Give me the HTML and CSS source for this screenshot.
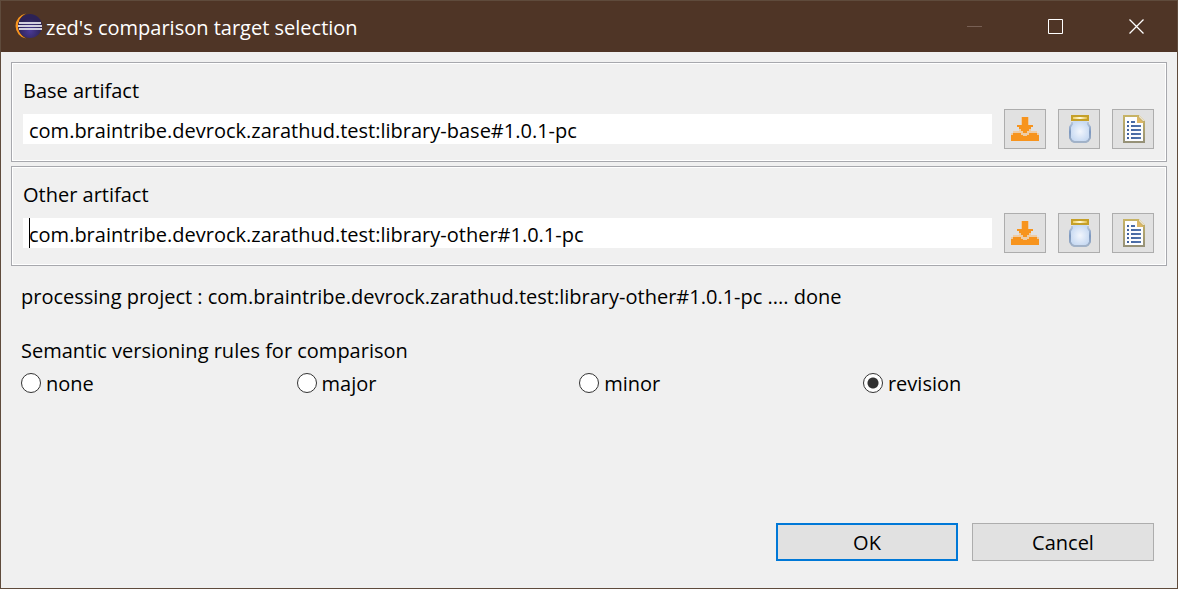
FILE: index.html
```html
<!DOCTYPE html>
<html lang="en">
<head>
<meta charset="utf-8">
<title>zed's comparison target selection</title>
<link rel="stylesheet" href="styles.css">
</head>
<body>
<svg class="defs" aria-hidden="true">
  <defs>
    <linearGradient id="gold" x1="0" y1="0" x2="0" y2="1"><stop offset="0" stop-color="#c8b464"/><stop offset="1" stop-color="#949078"/></linearGradient>
    <radialGradient id="glass"><stop offset="0" stop-color="#f2f6fd"/><stop offset="1" stop-color="#c8daf2"/></radialGradient>
    <linearGradient id="lid"><stop offset="0" stop-color="#f0cf60"/><stop offset=".5" stop-color="#fffbe0"/><stop offset="1" stop-color="#e5bd45"/></linearGradient>
    <linearGradient id="rim" x1="0" y1="0" x2="0" y2="1"><stop offset="0" stop-color="#b9c8dc"/><stop offset=".5" stop-color="#7d98bf"/><stop offset="1" stop-color="#a3b3c8"/></linearGradient>
    <linearGradient id="line"><stop offset="0" stop-color="#3d5f9c"/><stop offset="1" stop-color="#5577ae"/></linearGradient>
    <radialGradient id="orb" cx=".5" cy=".7"><stop offset="0" stop-color="#4a3a96"/><stop offset="1" stop-color="#2c2255"/></radialGradient>
    <symbol id="download" viewBox="0 0 32 32">
      <path fill="#fbb869" d="M12 4h8v8h4v2h-2v4h6v2h2v8H2v-8h2v-2h6v-4H8v-2h4z" opacity=".5"/>
      <path fill="#f7941e" d="M13 4h6v8h5v2h-2v2h-2v2h-2v2h-4v-2h-2v-2h-2v-2H8v-2h5z"/>
      <path fill="#f7941e" d="M4 20h8v2h2v1h4v-1h2v-2h8v2h2v6H2v-6h2z"/>
    </symbol>
    <symbol id="jar" viewBox="0 0 32 32">
      <path fill="url(#glass)" d="M10 8h14v2h2v3h1v14h-2v2H9v-2H7V13h1v-3h2z"/>
      <path fill="none" stroke="url(#rim)" stroke-width="2" d="M9 9v2l-2 3v11l2 3 2 1h12l2-1 2-3V14l-2-3V9"/>
      <path fill="#c5a029" d="M8 2h18v6H8z"/>
      <path fill="url(#lid)" d="M10 4h14v2H10z"/>
    </symbol>
    <symbol id="report" viewBox="0 0 32 32">
      <path fill="url(#gold)" d="M6 2h16l6 6v22H6z"/>
      <path fill="#fcfdff" d="M8 4h12v6h6v18H8z"/>
      <path fill="#dcb766" d="M20 3l7 7h-7z"/>
      <path fill="#ede4cf" d="M22 2l6 6h-2l-4-4z"/>
      <path fill="url(#line)" d="M10 8h2v2h-2zM14 8h4v2h-4zM10 12h2v2h-2zM14 12h10v2H14zM10 16h2v2h-2zM14 16h10v2H14zM10 20h2v2h-2zM14 20h10v2H14zM10 24h2v2h-2zM14 24h10v2H14z"/>
    </symbol>
  </defs>
</svg>
<main class="window">
  <header class="titlebar">
    <svg class="logo" viewBox="0 0 28 28" aria-hidden="true">
      <path fill="#f7941e" d="M12 .5A12.700 12.700 0 0 0 12 25.500A14 14 0 0 1 12 .5z"/>
      <circle cx="16" cy="13" r="12" fill="url(#orb)"/>
      <path fill="#d3d0df" d="M5 9h22v2H5zM4 12h24v2H4zM5 15h23v2H5z"/>
    </svg>
    <h1 class="title">zed's comparison target selection</h1>
    <div class="controls">
      <button class="control control-off" type="button" aria-label="Minimize" disabled><svg viewBox="0 0 15 15"><path d="M0 7.500h15"/></svg></button>
      <button class="control" type="button" aria-label="Maximize"><svg viewBox="0 0 15 15"><path d="M.5.5h14v14H.5z"/></svg></button>
      <button class="control" type="button" aria-label="Close"><svg viewBox="0 0 15 15"><path stroke-width="1.300" d="M.5.5l14 14M14.500.5l-14 14"/></svg></button>
    </div>
  </header>
  <form class="content">
    <section class="group">
      <label class="label" for="base">Base artifact</label>
      <div class="row">
        <div class="field"><input class="text" id="base" type="text" value="com.braintribe.devrock.zarathud.test:library-base#1.0.1-pc"></div>
        <button class="tool" type="button" aria-label="Download"><svg><use href="#download"/></svg></button>
        <button class="tool" type="button" aria-label="Select jar"><svg><use href="#jar"/></svg></button>
        <button class="tool" type="button" aria-label="Report"><svg><use href="#report"/></svg></button>
      </div>
    </section>
    <section class="group">
      <label class="label" for="other">Other artifact</label>
      <div class="row">
        <div class="field"><input class="text" id="other" type="text" value="com.braintribe.devrock.zarathud.test:library-other#1.0.1-pc"><span class="caret"></span></div>
        <button class="tool" type="button" aria-label="Download"><svg><use href="#download"/></svg></button>
        <button class="tool" type="button" aria-label="Select jar"><svg><use href="#jar"/></svg></button>
        <button class="tool" type="button" aria-label="Report"><svg><use href="#report"/></svg></button>
      </div>
    </section>
    <p class="status">processing project : com.braintribe.devrock.zarathud.test:library-other#1.0.1-pc .... done</p>
    <fieldset class="rules">
      <legend class="legend">Semantic versioning rules for comparison</legend>
      <div class="options">
        <label class="option"><input class="radio" type="radio" name="rule">none</label>
        <label class="option"><input class="radio" type="radio" name="rule">major</label>
        <label class="option"><input class="radio" type="radio" name="rule">minor</label>
        <label class="option"><input class="radio" type="radio" name="rule" checked>revision</label>
      </div>
    </fieldset>
    <footer class="actions">
      <button class="action action-default" type="submit">OK</button>
      <button class="action" type="button">Cancel</button>
    </footer>
  </form>
</main>
</body>
</html>
```
FILE: styles.css
```css
* { box-sizing: border-box; }
body { margin: 0; font: 20px/28px "Open Sans", "Noto Sans", sans-serif; color: #000; }
button, input { font: inherit; color: inherit; }
.defs { position: absolute; width: 0; height: 0; }
.window { display: flex; flex-direction: column; min-height: 100vh; border: 1px solid #5f4b3c; background: #f0f0f0; }
.titlebar { display: flex; align-items: center; height: 51px; padding-left: 13px; background: #4f3526; color: #fff; }
.logo { width: 28px; height: 28px; }
.title { flex: 1; margin: 0; padding: 2px 0 0 4px; font-size: 20px; font-weight: 400; }
.controls { display: flex; align-self: stretch; }
.control { display: grid; place-items: center; width: 81px; padding: 0; border: 0; background: none; }
.control svg { width: 15px; height: 15px; fill: none; stroke: #fff; }
.control-off svg { stroke: #786054; }
.content { display: flex; flex: 1; flex-direction: column; padding: 10px; }
.group { margin-bottom: 4px; padding: 14px 12px 12px 11px; border: 1px solid #a7a8ad; box-shadow: inset 0 0 0 1px #fff; }
.label { display: block; margin-bottom: 4px; }
.row { display: flex; align-items: center; gap: 12px; }
.field { position: relative; flex: 1; }
.text { display: block; width: 100%; height: 30px; padding: 2px 6px 0; border: 0; background: #fff; outline: 0; }
.caret { position: absolute; top: 0; left: 6px; width: 1px; height: 30px; background: #000; }
.tool { display: grid; place-items: center; width: 42px; height: 40px; padding: 0; border: 1px solid #adadad; background: #e1e1e1; }
.tool svg { display: block; width: 32px; height: 32px; }
.status { margin: 13px 10px 26px; }
.rules { margin: 0 3px 0 10px; padding: 0; border: 0; }
.legend { padding: 0; margin-bottom: 5px; }
.options { display: flex; }
.option { display: flex; flex: 1 1 auto; align-items: center; gap: 5px; }
.radio { appearance: none; width: 20px; height: 20px; margin: 0 0 2px; border: 1px solid #333; border-radius: 50%; background: #fff; }
.radio:checked { background: radial-gradient(circle, #333 0 5px, #fff 6px); }
.actions { display: flex; justify-content: flex-end; gap: 14px; margin-top: auto; padding: 0 13px 17px 0; }
.action { width: 182px; height: 38px; padding: 2px 0 0; border: 1px solid #adadad; background: #e1e1e1; }
.action-default { border: 2px solid #0078d7; }
```
